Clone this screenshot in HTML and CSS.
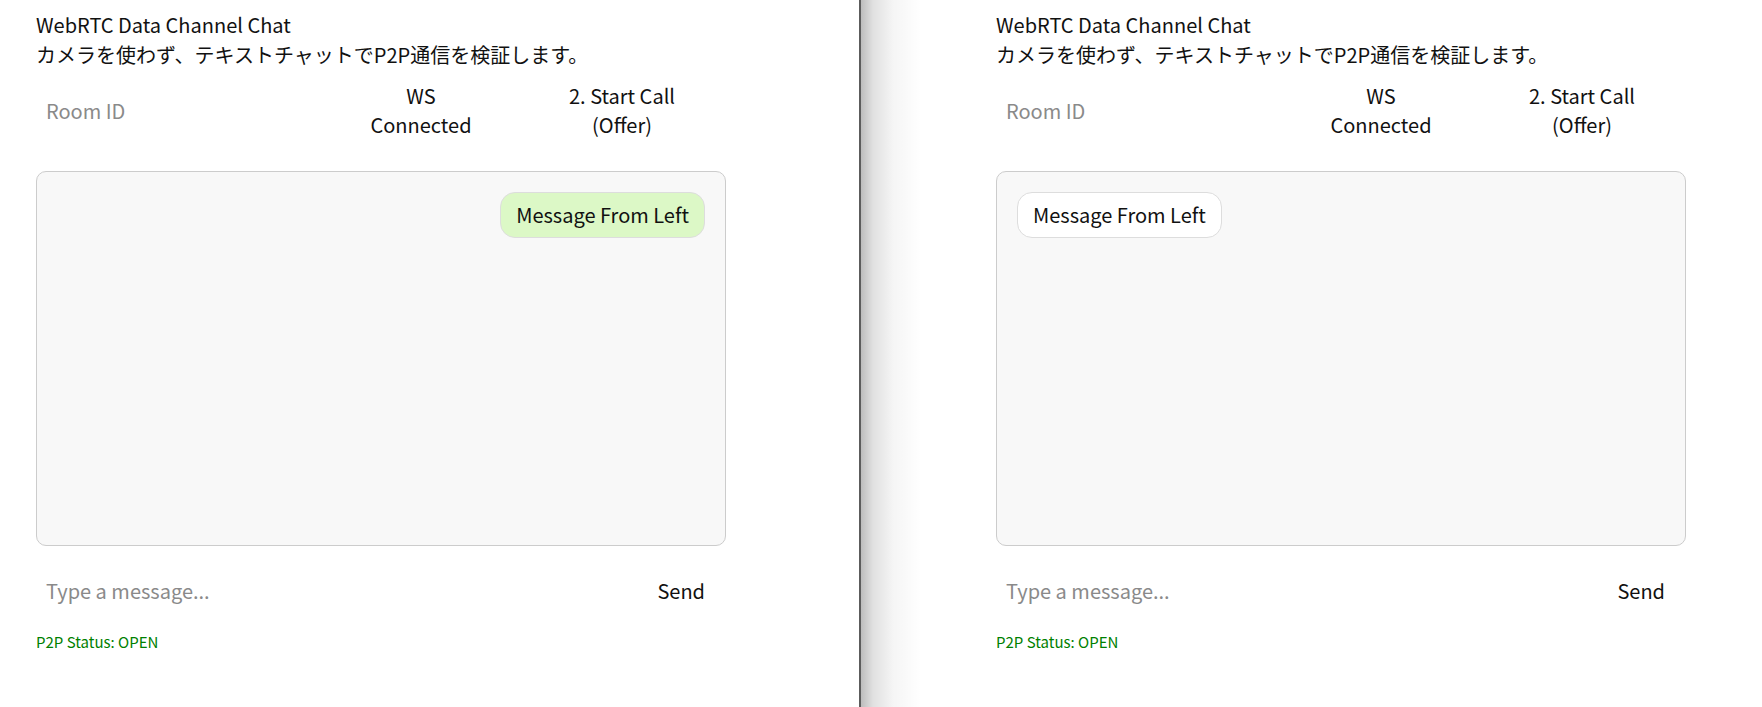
FILE: index.html
```html
<!DOCTYPE html>
<html lang="ja">
<head>
<meta charset="utf-8">
<title>WebRTC Data Channel Chat</title>
<link rel="stylesheet" href="styles.css">
</head>
<body>
  <div class="pane pane-left">
    <div class="app">
      <div class="header">
        <div class="title">WebRTC Data Channel Chat</div>
        <div class="subtitle">カメラを使わず、テキストチャットでP2P通信を検証します。</div>
      </div>
      <div class="controls">
        <input class="field room" type="text" placeholder="Room ID">
        <button class="btn btn-ws">WS Connected</button>
        <button class="btn btn-call">2. Start Call (Offer)</button>
      </div>
      <div class="chat">
        <div class="msg msg-mine">Message From Left</div>
      </div>
      <div class="composer">
        <input class="field message" type="text" placeholder="Type a message...">
        <button class="btn btn-send">Send</button>
      </div>
      <div class="status">P2P Status: OPEN</div>
    </div>
  </div>
  <div class="divider"></div>
  <div class="pane pane-right">
    <div class="app">
      <div class="header">
        <div class="title">WebRTC Data Channel Chat</div>
        <div class="subtitle">カメラを使わず、テキストチャットでP2P通信を検証します。</div>
      </div>
      <div class="controls">
        <input class="field room" type="text" placeholder="Room ID">
        <button class="btn btn-ws">WS Connected</button>
        <button class="btn btn-call">2. Start Call (Offer)</button>
      </div>
      <div class="chat">
        <div class="msg msg-theirs">Message From Left</div>
      </div>
      <div class="composer">
        <input class="field message" type="text" placeholder="Type a message...">
        <button class="btn btn-send">Send</button>
      </div>
      <div class="status">P2P Status: OPEN</div>
    </div>
  </div>
</body>
</html>
```

FILE: styles.css
```css
html, body {
  margin: 0;
  padding: 0;
  height: 100%;
  background: #ffffff;
}

body {
  display: flex;
  font-family: "Noto Sans CJK JP", "Noto Sans", sans-serif;
  font-size: 20px;
  color: #111111;
  overflow: hidden;
}

.pane {
  height: 707px;
  box-sizing: border-box;
  padding-top: 10px;
}

.pane-left {
  width: 859px;
  flex: 0 0 859px;
  padding-left: 36px;
}

.divider {
  flex: 0 0 2px;
  width: 2px;
  background: #5c5c5c;
}

.pane-right {
  flex: 1;
  padding-left: 135px;
  background: linear-gradient(to right,
    rgba(0, 0, 0, 0.26) 0px,
    rgba(0, 0, 0, 0.12) 12px,
    rgba(0, 0, 0, 0.04) 32px,
    rgba(0, 0, 0, 0) 60px);
}

.app {
  width: 690px;
}

.header {
  line-height: 30px;
}

.controls {
  display: flex;
  align-items: center;
  gap: 10px;
}

.field {
  font: inherit;
  color: #111111;
  border: none;
  outline: none;
  background: transparent;
  padding: 10px;
  line-height: 29px;
  min-width: 0;
}

.field::placeholder {
  color: #8a8a8a;
}

.room {
  flex: 1;
}

.btn {
  font: inherit;
  color: #111111;
  background: transparent;
  border: none;
  padding: 11px 35px;
  line-height: 29px;
  text-align: center;
}

.btn-ws {
  flex: 0 0 174px;
  width: 174px;
}

.btn-call {
  flex: 0 0 208px;
  width: 208px;
}

.chat {
  box-sizing: border-box;
  margin-top: 21px;
  height: 375px;
  border: 1px solid #cccccc;
  border-radius: 10px;
  background: #f8f8f8;
  padding: 20px;
  display: flex;
  flex-direction: column;
}

.msg {
  padding: 8px 15px;
  line-height: 28px;
  border: 1px solid #dddddd;
  border-radius: 15px;
  max-width: 70%;
}

.msg-mine {
  align-self: flex-end;
  background: #dcf8c6;
}

.msg-theirs {
  align-self: flex-start;
  background: #ffffff;
}

.composer {
  display: flex;
  align-items: center;
  margin-top: 20px;
}

.message {
  flex: 1;
}

.btn-send {
  padding: 10px 21px;
}

.status {
  margin-top: 16px;
  font-size: 15px;
  color: #008000;
}
```
